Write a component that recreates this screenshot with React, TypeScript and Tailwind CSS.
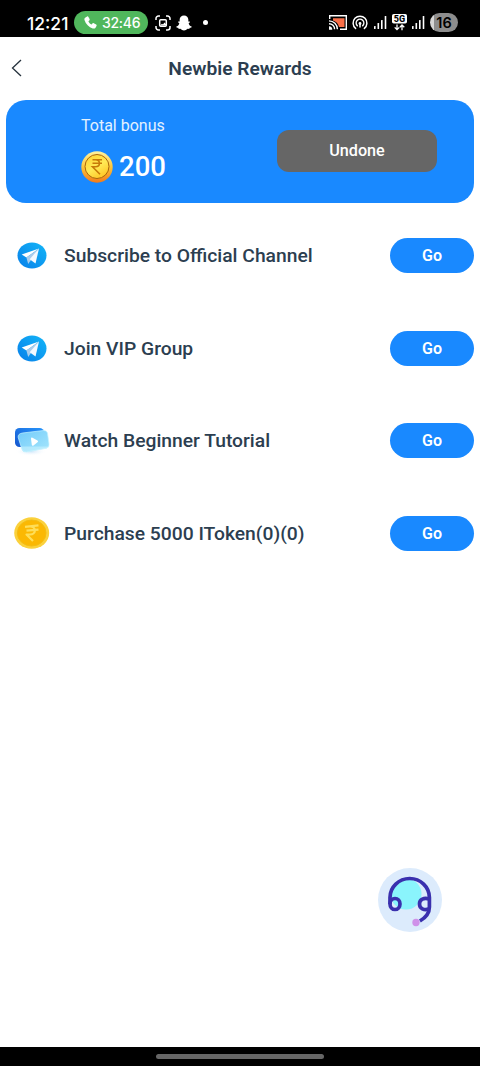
import React from 'react';

const PhoneIcon = () => (
  <svg viewBox="0 0 24 24" className="h-[15px] w-[15px] shrink-0" fill="white">
    <path d="M6.600 2.400 3.400 4.200C2.200 5 2 6.600 2.500 8.400c1.900 6.200 6.900 11.200 13.100 13.100 1.800.5 3.400.3 4.200-.9l1.800-3.200c.5-.9.200-1.700-.6-2.200l-3.700-2.100c-.8-.5-1.600-.3-2.200.4l-1.300 1.600c-2.600-1.200-4.200-2.900-5.200-5.200l1.500-1.300c.7-.6.9-1.400.4-2.200L8.700 3C8.200 2.200 7.400 1.900 6.600 2.400z" />
  </svg>
);

const CaptureIcon = () => (
  <svg viewBox="0 0 16 16" className="h-4 w-4" fill="none" stroke="white" strokeWidth="1.500">
    <path d="M1 5V3.500A2.500 2.500 0 0 1 3.500 1H5M11 1h1.500A2.500 2.500 0 0 1 15 3.500V5M15 11v1.500a2.500 2.500 0 0 1-2.500 2.500H11M5 15H3.500A2.500 2.500 0 0 1 1 12.500V11" />
    <rect x="4.700" y="4.700" width="6.600" height="6.600" rx="1" />
    <path d="m5 10.500 2-1.800 1 .7 1.500-1.800 1.500 1.600v1.300H5z" fill="white" stroke="none" />
  </svg>
);

const SnapIcon = () => (
  <svg viewBox="0 0 24 24" className="h-4 w-4" fill="white">
    <path d="M12 .8c3.900 0 6.500 2.700 6.500 6v3c.9.300 1.700-.4 2.300.3.700.9-.6 1.500-1.800 2 .5 2.600 1.600 4.500 4.200 5.100.6.200.7.700.2 1.100-.8.600-1.800.7-2.600 1-.4.300-.2 1.200-.8 1.500-.8.300-1.900-.2-3 .1-1.600.5-2.500 2.300-5 2.300s-3.400-1.800-5-2.300c-1.100-.3-2.200.2-3-.1-.6-.3-.4-1.200-.8-1.500-.8-.3-1.800-.4-2.600-1-.5-.4-.4-.9.200-1.100 2.600-.6 3.700-2.500 4.200-5.100-1.200-.5-2.500-1.100-1.800-2 .6-.7 1.400 0 2.300-.3v-3c0-3.300 2.600-6 6.500-6z" />
  </svg>
);

const CastIcon = () => (
  <svg viewBox="0 0 18 15" className="h-[15px] w-[18px]" fill="none" stroke="white" strokeWidth="1.400">
    <path d="M4 3.200h11.500v8.800H10C9.400 8.500 7 6.200 4 5.400z" fill="#f96f48" stroke="none" />
    <path d="M.7 4V.8h16.600v13.400H11" />
    <path d="M0 5.900a8.400 8.400 0 0 1 8.400 8.400M0 8.700a5.600 5.600 0 0 1 5.600 5.600" />
    <path d="M0 11.300a3.500 3.500 0 0 1 3.300 3.500H0z" fill="white" stroke="none" />
  </svg>
);

const HotspotIcon = () => (
  <svg viewBox="0 0 16 16" className="h-4 w-4" fill="none" stroke="white" strokeWidth="1.500" strokeLinecap="round">
    <path d="M3.600 13.400a6.900 6.900 0 1 1 8.800 0" />
    <path d="M5.300 10.700a3.800 3.800 0 1 1 5.400 0" />
    <circle cx="8" cy="8.500" r="1.400" fill="white" stroke="none" />
    <path d="M8 9v3" />
  </svg>
);

const SignalIcon = () => (
  <svg viewBox="0 0 13 13" className="h-[13px] w-[13px]" fill="white">
    <rect x="0" y="10" width="1.600" height="3" rx=".5" />
    <rect x="3.500" y="7" width="1.600" height="6" rx=".5" />
    <rect x="7" y="4" width="1.600" height="9" rx=".5" />
    <rect x="10.700" y="0" width="1.600" height="13" rx=".5" />
  </svg>
);

const NetworkIcon = () => (
  <svg viewBox="0 0 15 17" className="h-[17px] w-[15px]">
    <rect width="15" height="9.500" rx="1.800" fill="white" />
    <text x="7.500" y="8" textAnchor="middle" fontFamily="Roboto, sans-serif" fontWeight="800" fontSize="9">5G</text>
    <path d="M5 10.500v5M2.700 13.400 5 15.700l2.300-2.300M10 16.300v-5M7.900 13.200 10 11l2.300 2.200" fill="none" stroke="white" strokeWidth="1.300" />
  </svg>
);

const BonusCoin = () => (
  <svg viewBox="0 0 32 32" className="h-8 w-8">
    <defs>
      <linearGradient id="coinRim" x1="0" y1="0" x2="0" y2="1">
        <stop offset="0" stopColor="#fff3a0" />
        <stop offset=".5" stopColor="#fcc53a" />
        <stop offset="1" stopColor="#f27a1b" />
      </linearGradient>
      <linearGradient id="coinFace" x1=".2" y1="0" x2=".8" y2="1">
        <stop offset="0" stopColor="#ffd535" />
        <stop offset=".5" stopColor="#ffe955" />
        <stop offset="1" stopColor="#ffc11f" />
      </linearGradient>
    </defs>
    <circle cx="16" cy="16" r="15.700" fill="url(#coinRim)" />
    <circle cx="16" cy="15.500" r="12" fill="url(#coinFace)" stroke="#a9650b" strokeWidth="1" />
    <path d="M11.500 8.800h9.500M11.500 12.300h9.500M11.500 8.800h3c5.200 0 5.200 7 0 7h-3l7.500 7.500" fill="none" stroke="#c77908" strokeWidth="1.600" />
  </svg>
);

const TelegramIcon = () => (
  <svg viewBox="0 0 30 27" className="h-[27px] w-[30px]">
    <defs>
      <linearGradient id="tgBg" x1="1" y1="0" x2="0" y2="1">
        <stop offset="0" stopColor="#13b6f8" />
        <stop offset="1" stopColor="#087fe9" />
      </linearGradient>
    </defs>
    <ellipse cx="15" cy="13.500" rx="14.500" ry="13" fill="url(#tgBg)" />
    <path d="M22 6.500 4.700 12.500l4.700 3z" fill="#fff" />
    <path d="m22 6.500-12.600 9 1.800 6.500z" fill="#a9ccec" />
    <path d="m22 6.500-10.800 15.500 2.500-3.800z" fill="#c9e1f7" />
    <path d="m22 6.500-9.300 10.700 5.800 4.300z" fill="#f4f9ff" />
  </svg>
);

const VideoIcon = () => (
  <svg viewBox="0 0 38 30" className="h-[30px] w-[38px]">
    <defs>
      <linearGradient id="videoBack" x1="0" y1="1" x2="1" y2="0">
        <stop offset="0" stopColor="#1556ce" />
        <stop offset="1" stopColor="#2795fb" />
      </linearGradient>
      <linearGradient id="videoFront" x1="0" y1="0" x2="1" y2="1">
        <stop offset="0" stopColor="#72cbfa" />
        <stop offset="1" stopColor="#a5e6fc" />
      </linearGradient>
      <radialGradient id="videoShadow">
        <stop offset="0" stopColor="#cfe6fa" />
        <stop offset="1" stopColor="#ffffff" stopOpacity="0" />
      </radialGradient>
    </defs>
    <ellipse cx="18" cy="25.500" rx="16" ry="4.500" fill="url(#videoShadow)" />
    <rect x="2" y="2" width="29" height="19" rx="4.500" fill="url(#videoBack)" />
    <path d="m9.500 7 21-2.500q3.300-.3 4 2.500l1.500 11q.4 3.300-2.500 4.200L13.500 26q-3.500.5-4.600-2.800L5.200 11.500Q4.600 7.800 9.500 7z" fill="url(#videoFront)" stroke="#c5f3ff" strokeWidth=".7" />
    <path d="M8.200 20.500h27.900q-.6 1.500-2.600 1.900L13.500 26q-3.500.5-4.600-2.800z" fill="#d5f7ff" opacity=".5" />
    <path d="M18 12.700q0-1.600 1.500-1l5 2.700q1.300.9 0 1.800l-4 3.200q-1.400.8-1.700-.7z" fill="white" />
  </svg>
);

const TokenIcon = () => (
  <svg viewBox="0 0 36 32" className="h-8 w-9">
    <ellipse cx="17.700" cy="16" rx="17.500" ry="15.800" fill="#fbd13c" />
    <ellipse cx="17.700" cy="16" rx="14.300" ry="13" fill="#fbb803" stroke="#f4bc13" />
    <path d="M11 9.800 24.500 8.300M12.500 13.700 24.500 12.700M13.500 9.500h2.500c6.500 0 6.500 8 0 8h-3.500l6.500 6.500" fill="none" stroke="#fede58" strokeWidth="2.200" strokeLinejoin="round" />
  </svg>
);

const HeadsetIcon = () => (
  <svg viewBox="0 0 64 64" className="h-16 w-16">
    <circle cx="32" cy="32" r="32" fill="#dcebfc" />
    <circle cx="28" cy="26" r="15.500" fill="#8af4fc" />
    <g fill="none" stroke="#3a30ae" strokeWidth="3.700">
      <path d="M12 36V29.500a19.700 19 0 0 1 39.400 0v9.500q0 8.500-9.500 14" />
      <ellipse cx="17" cy="36" rx="5" ry="5.500" />
      <path d="M51 31c-5-1.500-9.500.3-9.500 5s4.500 6.500 9.500 5" />
    </g>
    <circle cx="38" cy="54.500" r="3.700" fill="#cf91e9" />
  </svg>
);

const tasks = [
  { title: 'Subscribe to Official Channel', icon: <TelegramIcon /> },
  { title: 'Join VIP Group', icon: <TelegramIcon /> },
  { title: 'Watch Beginner Tutorial', icon: <VideoIcon /> },
  { title: 'Purchase 5000 IToken(0)(0)', icon: <TokenIcon /> },
];

const StatusBar: React.FC = () => (
  <div className="flex h-[36.500px] shrink-0 items-center justify-between bg-black pt-[9px] pr-[22px] pl-[27px] font-['Inter',sans-serif] text-white">
    <div className="flex items-center">
      <span className="w-[47px] pt-px text-[17.500px] leading-none font-medium">12:21</span>
      <div className="flex h-[23px] w-[74px] items-center gap-[4px] rounded-full bg-[#50b75c] pl-[9px]">
        <PhoneIcon />
        <span className="text-[14px] leading-none font-medium tracking-[-0.300px]">32:46</span>
      </div>
      <div className="flex items-center gap-[5px] pl-[7px]">
        <CaptureIcon />
        <SnapIcon />
      </div>
      <span className="ml-[11px] h-[5px] w-[5px] rounded-full bg-white" />
    </div>
    <div className="flex items-center gap-[5px]">
      <CastIcon />
      <HotspotIcon />
      <div className="pl-[1.500px]"><SignalIcon /></div>
      <NetworkIcon />
      <SignalIcon />
      <div className="flex h-[19px] w-7 items-center justify-center rounded-full bg-[linear-gradient(90deg,#d5d5d5_16%,#8d8d8d_16%)] text-[14.500px] leading-none font-semibold text-black">
        16
      </div>
    </div>
  </div>
);

const App: React.FC = () => {
  return (
    <div className="flex h-[1066px] w-[480px] flex-col overflow-hidden bg-white font-['Roboto',sans-serif] text-[#2c3e50]">
      <StatusBar />

      <header className="grid h-[63.500px] shrink-0 grid-cols-[40px_1fr_40px] items-center">
        <button className="pl-[11px]" aria-label="Back">
          <svg viewBox="0 0 11 18" className="h-[18px] w-[11px]" fill="none" stroke="#26323d" strokeWidth="1.300">
            <path d="M10 1 1.500 9l8.500 8" />
          </svg>
        </button>
        <h1 className="pt-[2px] text-center text-[19.200px] leading-6 font-semibold">Newbie Rewards</h1>
      </header>

      <main className="flex flex-1 flex-col px-[6px]">
        <section className="flex h-[102.500px] items-center justify-between rounded-[20px] bg-[#1989ff] pr-[37px] pl-[75px]">
          <div className="flex flex-col items-start gap-[13px] pb-[6px] text-white">
            <span className="text-[16px] leading-6 text-[#e3f1ff]">Total bonus</span>
            <div className="flex items-center gap-[6px]">
              <BonusCoin />
              <span className="text-[27.500px] leading-8 font-medium">200</span>
            </div>
          </div>
          <button className="h-[42px] w-40 rounded-[12px] bg-[#666666] text-[16.200px] font-medium text-white">Undone</button>
        </section>

        <ul className="pt-[6.500px]">
          {tasks.map((task) => (
            <li key={task.title} className="flex h-[92.700px] items-center">
              <div className="flex w-[52px] shrink-0 justify-center">{task.icon}</div>
              <span className="flex-1 pt-[2px] pl-[6px] text-[19.270px] font-medium">{task.title}</span>
              <button className="h-[35px] w-[84px] rounded-full bg-[#1989ff] pt-px text-[16px] font-semibold text-white">Go</button>
            </li>
          ))}
        </ul>

        <div className="mt-auto flex justify-end pr-[32px] pb-[115px]">
          <button aria-label="Support">
            <HeadsetIcon />
          </button>
        </div>
      </main>

      <footer className="flex h-[19px] shrink-0 items-center justify-center bg-black">
        <div className="h-[5px] w-[168px] rounded-full bg-[#666666]" />
      </footer>
    </div>
  );
};

export default App;
